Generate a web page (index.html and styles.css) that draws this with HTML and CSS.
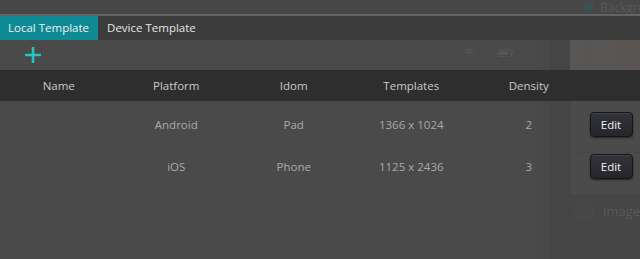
FILE: index.html
```html
<!doctype html>
<html lang="en">
 <head>
  <meta charset="UTF-8">
  <meta name="viewport" content="width=device-width, initial-scale=1.0">
  <title>Device Templates</title>
  <link rel="stylesheet" href="styles.css">
 </head>
 <body>
  <!-- dimmed editor behind the dialog -->
  <div class="app">
   <div class="app-top">
    <span class="radio"></span>
    <span class="faint-label">Background</span>
   </div>
   <div class="app-main">
    <div class="canvas">
     <div class="status-icons">
      <svg width="12" height="9" viewBox="0 0 12 9"><path d="M1 3.5a7 7 0 0 1 10 0M3 5.5a4 4 0 0 1 6 0" stroke="#555" stroke-width="1.4" fill="none"/><circle cx="6" cy="7.5" r="1.1" fill="#555"/></svg>
      <svg width="17" height="8" viewBox="0 0 17 8"><rect x="0.5" y="0.5" width="14" height="7" rx="1" stroke="#555" fill="none"/><rect x="2" y="2" width="9" height="4" fill="#555"/><rect x="15" y="2.5" width="1.5" height="3" fill="#555"/></svg>
     </div>
    </div>
    <div class="gutter"></div>
    <div class="side">
     <div class="preview"></div>
     <div class="side-box"></div>
     <div class="side-box short"></div>
     <div class="side-item">
      <span class="radio big"></span>
      <span class="faint-label">Image</span>
     </div>
    </div>
   </div>
  </div>

  <div class="dialog">
   <div class="tabs">
    <div class="tab active">Local Template</div>
    <div class="tab">Device Template</div>
   </div>
   <div class="toolbar">
    <button class="add-btn" title="Add">
     <svg width="18" height="18" viewBox="0 0 18 18"><path d="M9 1v16M1 9h16" stroke="#22c4c4" stroke-width="2.6"/></svg>
    </button>
   </div>
   <div class="grid-row head">
    <div>Name</div>
    <div>Platform</div>
    <div>Idom</div>
    <div>Templates</div>
    <div>Density</div>
    <div></div>
   </div>
   <div class="rows">
    <div class="grid-row">
     <div></div>
     <div>Android</div>
     <div>Pad</div>
     <div>1366 x 1024</div>
     <div>2</div>
     <div class="action"><button class="edit-btn">Edit</button></div>
    </div>
    <div class="grid-row">
     <div></div>
     <div>iOS</div>
     <div>Phone</div>
     <div>1125 x 2436</div>
     <div>3</div>
     <div class="action"><button class="edit-btn">Edit</button></div>
    </div>
   </div>
  </div>
 </body>
</html>
```
FILE: styles.css
```css
body {
  margin: 0;
  width: 640px;
  height: 259px;
  overflow: hidden;
  position: relative;
  font-family: "Open Sans", "Noto Sans", sans-serif;
  font-size: 11.5px;
  background-color: #4a4a4a;
}
.app {
  display: flex;
  flex-direction: column;
  height: 100%;
}
.app-top {
  height: 14px;
  background-color: #474747;
  display: flex;
  justify-content: flex-end;
  align-items: center;
  gap: 6px;
  overflow: hidden;
}
.app-top .faint-label {
  width: 40px;
  white-space: nowrap;
  overflow: hidden;
  font-size: 12px;
}
.faint-label {
  color: #585858;
}
.radio {
  width: 10px;
  height: 10px;
  border-radius: 50%;
  background-color: #3d5252;
}
.radio.big {
  width: 16px;
  height: 16px;
  background-color: #474747;
  border: 1px solid #4e4e4e;
}
.app-main {
  flex: 1;
  display: flex;
  background-color: #464646;
}
.canvas {
  width: 537px;
  background-color: #4a4a4a;
  border-top-right-radius: 20px;
  display: flex;
  justify-content: flex-end;
}
.status-icons {
  display: flex;
  align-items: center;
  gap: 22px;
  height: 15px;
  margin-top: 31px;
  margin-right: 23px;
}
.gutter {
  width: 33px;
  background: linear-gradient(to right, #484848 0, #484848 13px, #454545 13px);
}
.side {
  flex: 1;
  display: flex;
  flex-direction: column;
}
.preview {
  height: 56px;
  background: linear-gradient(to right, #585756, #5a5553);
}
.side-box {
  height: 82px;
  background-color: #4b4b4b;
  border-left: 1px solid #474747;
  border-bottom: 1px solid #474747;
}
.side-box.short {
  height: 41px;
}
.side-item {
  display: flex;
  align-items: center;
  gap: 10px;
  padding: 7px 0 0 5px;
  font-size: 13px;
}
.dialog {
  position: absolute;
  top: 14px;
  left: 0;
  right: 0;
  bottom: 0;
  border-top: 2px solid #636363;
}
.tabs {
  height: 24px;
  display: flex;
  background-color: #3c3c3c;
}
.tab {
  padding: 0 9px;
  line-height: 24px;
  color: #e6e6e6;
}
.tab.active {
  background-color: #0e8a94;
  padding: 0 9px 0 8px;
  color: #f0f0f0;
}
.toolbar {
  height: 30px;
  display: flex;
  align-items: center;
  padding-left: 24px;
}
.add-btn {
  background: none;
  border: none;
  padding: 0;
  width: 18px;
  height: 18px;
  display: flex;
}
.grid-row {
  display: grid;
  grid-template-columns: repeat(5, 117.5px) 1fr;
  align-items: center;
  text-align: center;
  height: 42px;
  color: #a9a9a9;
}
.grid-row.head {
  height: 31px;
  background-color: #2e2e2e;
  color: #c9c9c9;
}
.rows {
  padding-top: 2px;
}
.action {
  text-align: left;
  padding-left: 2px;
}
.edit-btn {
  width: 43px;
  height: 25px;
  font-family: "Open Sans", "Noto Sans", sans-serif;
  font-size: 11.5px;
  color: #f2f2f2;
  background: linear-gradient(#33333a, #25252b);
  border: 1px solid #151518;
  border-radius: 4px;
  box-shadow: 0 1px 2px rgba(0, 0, 0, 0.5), inset 0 1px 0 rgba(255, 255, 255, 0.08);
  cursor: pointer;
}
```
